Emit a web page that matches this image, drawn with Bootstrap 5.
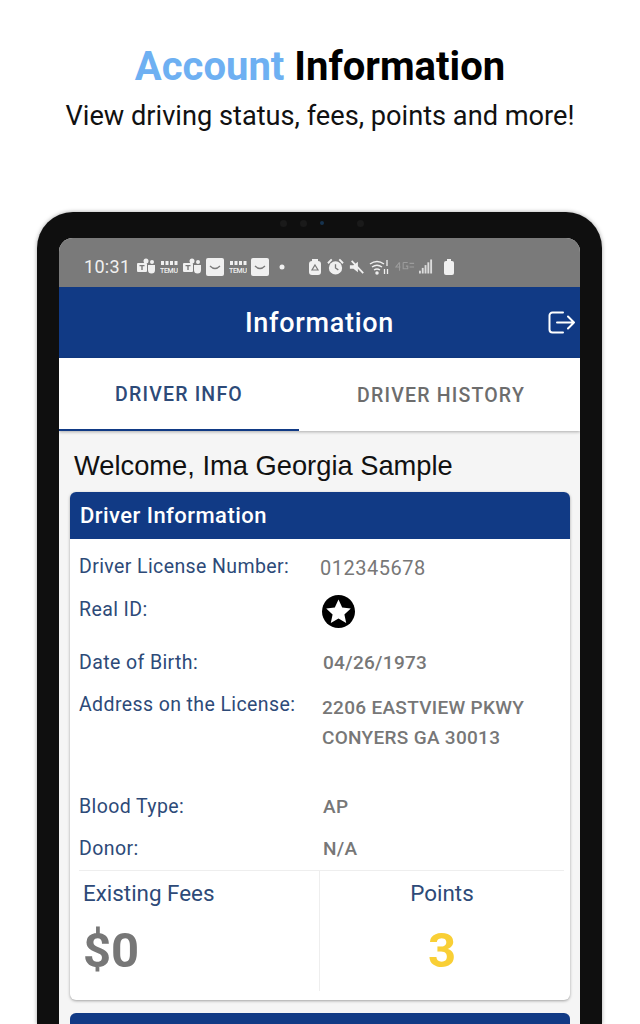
<!DOCTYPE html>
<html lang="en">
<head>
    <meta charset="UTF-8">
    <meta name="viewport" content="width=device-width, initial-scale=1.0">
    <title>Account Information</title>
    <link rel="stylesheet" href="https://cdn.jsdelivr.net/npm/bootstrap@5.3.0/dist/css/bootstrap.min.css">
    <style>
        html, body { height: 1024px; overflow: hidden; background: #fff; }
        body { font-family: Roboto, sans-serif; }
        .promo { padding-top: 44px; height: 212px; }
        .promo h1 { font-size: 40px; line-height: 46px; font-weight: 700; margin: 0; color: #000; }
        .promo h1 span { color: #6eb0f2; }
        .promo p { font-size: 27.2px; line-height: 34px; margin: 9px 0 0; color: #111; }
        .device { margin: 0 38px 0 37px; height: 812px; background: #0f0f0f; border-radius: 36px 36px 0 0; padding: 26px 22px 0; box-shadow: 0 0 4px rgba(0,0,0,.35); position: relative; }
        .camera { position: absolute; top: 8px; left: 243px; gap: 13px; }
        .camera i { display: block; width: 7px; height: 7px; border-radius: 50%; background: #1a1a1a; }
        .camera i.lens { background: #17334f; width: 4px; height: 4px; margin-top: 1px; }
        .camera i.last { margin-left: 20px; }
        .screen { height: 786px; background: #f5f5f5; border-radius: 14px 14px 0 0; overflow: hidden; }
        .status-strip { height: 49px; background: #7a7a7a; color: #f0f0f0; padding: 8px 0 0 25px; gap: 4.5px; font-size: 18px; }
        .status-strip .clock { margin-right: 2px; letter-spacing: .3px; }
        .status-strip .spacer { width: 10px; }
        .status-strip .recycle { margin-right: 2px; }
        .status-strip .batt { margin-left: 5px; }
        .app-head { height: 71px; background: #113a85; color: #fff; position: relative; font-size: 27px; font-weight: 500; letter-spacing: .7px; padding-top: 1px; }
        .app-head svg { position: absolute; right: 5px; top: 24px; }
        .tab-strip { height: 73px; background: #fff; box-shadow: 0 1px 3px rgba(0,0,0,.3); position: relative; }
        .tab-item { flex: 1 1 0; font-size: 19.5px; font-weight: 500; letter-spacing: 1.2px; color: #6d6d6d; padding: 2px 0 0 3px; }
        .tab-item.on { flex: 0 0 240px; color: #2d4a78; padding-left: 0; border-bottom: 2px solid #113a85; }
        .welcome { font-family: "Liberation Sans", sans-serif; font-size: 27.3px; line-height: 30px; color: #111; padding: 20px 0 0 15px; height: 61px; }
        .info-box { margin: 0 10px 0 11px; height: 508px; background: #fff; border-radius: 6px; box-shadow: 0 1px 3px rgba(0,0,0,.35); overflow: hidden; }
        .info-top { height: 47px; background: #113a85; color: #fff; font-size: 22px; font-weight: 500; letter-spacing: .45px; padding-left: 10px; }
        .info-body { padding: 0 6px 0 9px; }
        .line { position: relative; font-size: 19.5px; color: #2d4a78; letter-spacing: .4px; line-height: 26px; }
        .line .val { color: #777; font-weight: 500; font-size: 19px; letter-spacing: .3px; position: absolute; left: 244px; top: 0; }
        .h-a { height: 58px; padding-top: 15px; }
        .h-b { height: 53px; }
        .h-c { height: 42px; }
        .h-d { height: 102px; }
        .h-e { height: 34px; }
        .line .val.plain { font-weight: 400; font-size: 20px; left: 241px; top: 16px; letter-spacing: .5px; }
        .line .val.addr { line-height: 30px; top: 1px; left: 243px; }
        .line .val.star { left: 243px; top: -2px; }
        .totals { border-top: 1px solid #eee; height: 120px; }
        .totals > div { padding-top: 6px; font-size: 22.4px; color: #2d4a78; }
        .totals .fee { flex: 0 0 241px; height: 120px; border-right: 1px solid #eee; padding-left: 4px; }
        .totals .pts { flex: 1 1 0; }
        .big-num { font-size: 49px; font-weight: 700; line-height: 60px; margin-top: 10px; color: #777; }
        .big-num.gold { color: #f9cf35; }
        .next-box { margin: 13px 10px 0 11px; height: 20px; background: #113a85; border-radius: 6px 6px 0 0; }
        .temu-mark { font-size: 7px; fill: #f0f0f0; font-family: Roboto, sans-serif; font-weight: 500; }
    </style>
</head>
<body>
    <div class="promo text-center">
        <h1><span>Account</span> Information</h1>
        <p>View driving status, fees, points and more!</p>
    </div>

    <div class="device">
        <div class="camera d-flex"><i></i><i></i><i class="lens"></i><i class="last"></i></div>
        <div class="screen">
            <div class="status-strip d-flex align-items-center">
                <span class="clock">10:31</span>
                <svg width="19" height="18" viewBox="0 0 19 18" fill="#f0f0f0"><rect x="0" y="5" width="10" height="9" rx="1"/><circle cx="9" cy="3" r="2.5"/><circle cx="15" cy="4" r="2"/><path d="M11 7h7v5a3.500 3.500 0 0 1-7 0z"/><path d="M2.500 7h5v1.300H5.700V12H4.300V8.300H2.500z" fill="#7a7a7a"/></svg>
                <svg width="18" height="14" viewBox="0 0 18 14" fill="#f0f0f0"><rect x="1" y="1" width="3" height="4"/><rect x="5.500" y="1" width="3" height="4"/><rect x="10" y="1" width="3" height="4"/><rect x="14.500" y="1" width="3" height="4"/><text class="temu-mark" x="0" y="13" textLength="18">TEMU</text></svg>
                <svg width="19" height="18" viewBox="0 0 19 18" fill="#f0f0f0"><rect x="0" y="5" width="10" height="9" rx="1"/><circle cx="9" cy="3" r="2.500"/><circle cx="15" cy="4" r="2"/><path d="M11 7h7v5a3.500 3.500 0 0 1-7 0z"/><path d="M2.500 7h5v1.300H5.700V12H4.300V8.300H2.500z" fill="#7a7a7a"/></svg>
                <svg width="18" height="18" viewBox="0 0 18 18"><rect width="18" height="18" rx="2" fill="#f0f0f0"/><path d="M4 8q5 5 10 0" fill="none" stroke="#7a7a7a" stroke-width="1.300"/></svg>
                <svg width="18" height="14" viewBox="0 0 18 14" fill="#f0f0f0"><rect x="1" y="1" width="3" height="4"/><rect x="5.500" y="1" width="3" height="4"/><rect x="10" y="1" width="3" height="4"/><rect x="14.500" y="1" width="3" height="4"/><text class="temu-mark" x="0" y="13" textLength="18">TEMU</text></svg>
                <svg width="18" height="18" viewBox="0 0 18 18"><rect width="18" height="18" rx="2" fill="#f0f0f0"/><path d="M4 8q5 5 10 0" fill="none" stroke="#7a7a7a" stroke-width="1.300"/></svg>
                <svg width="16" height="8" viewBox="0 0 16 8" fill="#f0f0f0"><circle cx="8" cy="4" r="2.500"/></svg>
                <span class="spacer"></span>
                <svg class="recycle" width="12" height="18" viewBox="0 0 12 18"><rect x="0" y="3" width="12" height="14" rx="3" fill="#f0f0f0"/><rect x="3" y="1" width="6" height="3" fill="#f0f0f0"/><path d="M6 7l3 5H3z" fill="none" stroke="#7a7a7a" stroke-width="1.200"/></svg>
                <svg width="17" height="18" viewBox="0 0 18 18"><circle cx="9" cy="10" r="7" fill="#f0f0f0"/><path d="M1 5l4-4M17 5l-4-4" stroke="#f0f0f0" stroke-width="2"/><path d="M9 6v4l3 2" fill="none" stroke="#7a7a7a" stroke-width="1.400"/></svg>
                <svg width="16" height="18" viewBox="0 0 18 18" fill="#f0f0f0"><path d="M1 7h4l5-4v12l-5-4H1z"/><path d="M3 2l13 14" stroke="#f0f0f0" stroke-width="2"/></svg>
                <svg width="21" height="18" viewBox="0 0 21 18" fill="none" stroke="#f0f0f0" stroke-width="1.500"><path d="M1 6q7-5 14 0M3 9q5-3.500 10 0M5 12q3-2 6 0"/><circle cx="8" cy="15" r="1" fill="#f0f0f0"/><path d="M18 2v6M15.500 11v5M18.500 11v5" stroke-width="1.300"/></svg>
                <svg width="20" height="12" viewBox="0 0 22 12" fill="none" stroke="#9c9c9c" stroke-width="1.200"><path d="M5 1L1 6h5M5 1v9M9 1h5M9 1v7h5V5h-2M16 2h5M16 6h5"/></svg>
                <svg width="14" height="15" viewBox="0 0 15 15" fill="#dcdcdc"><rect x="0" y="12" width="2" height="3"/><rect x="3" y="9" width="2" height="6"/><rect x="6" y="6" width="2" height="9"/><rect x="9" y="3" width="2" height="12"/><rect x="12" y="0" width="2" height="15"/></svg>
                <svg class="batt" width="12" height="16" viewBox="0 0 12 16" fill="#f0f0f0"><rect x="1" y="2" width="10" height="14" rx="2"/><rect x="4" y="0" width="4" height="2"/></svg>
            </div>

            <div class="app-head d-flex align-items-center justify-content-center">
                Information
                <svg width="27" height="23" viewBox="0 0 27 23" fill="none" stroke="#fff" stroke-width="2" stroke-linecap="round" stroke-linejoin="round"><path d="M15 1.500H4.500a3 3 0 0 0-3 3v14a3 3 0 0 0 3 3H15"/><path d="M9 11.500h17M20 5.500l6 6-6 6"/></svg>
            </div>

            <div class="tab-strip d-flex">
                <div class="tab-item on d-flex align-items-center justify-content-center">DRIVER INFO</div>
                <div class="tab-item d-flex align-items-center justify-content-center">DRIVER HISTORY</div>
            </div>

            <div class="welcome">Welcome, Ima Georgia Sample</div>

            <div class="info-box">
                <div class="info-top d-flex align-items-center">Driver Information</div>
                <div class="info-body">
                    <div class="line h-a">Driver License Number:<span class="val plain">012345678</span></div>
                    <div class="line h-b">Real ID:
                        <span class="val star">
                            <svg width="33" height="33" viewBox="0 0 33 33"><circle cx="16.500" cy="16.500" r="16.500" fill="#000"/><path d="M16.500 4.500l3.700 8 8.600 1-6.400 5.900 1.800 8.600-7.700-4.400-7.700 4.400 1.800-8.600-6.400-5.900 8.600-1z" fill="#fff"/></svg>
                        </span>
                    </div>
                    <div class="line h-c">Date of Birth:<span class="val">04/26/1973</span></div>
                    <div class="line h-d">Address on the License:<span class="val addr">2206 EASTVIEW PKWY<br>CONYERS GA 30013</span></div>
                    <div class="line h-c">Blood Type:<span class="val">AP</span></div>
                    <div class="line h-e">Donor:<span class="val">N/A</span></div>
                    <div class="totals d-flex">
                        <div class="fee">
                            Existing Fees
                            <div class="big-num">$0</div>
                        </div>
                        <div class="pts text-center">
                            Points
                            <div class="big-num gold">3</div>
                        </div>
                    </div>
                </div>
            </div>
            <div class="next-box"></div>
        </div>
    </div>
    <script src="https://cdn.jsdelivr.net/npm/bootstrap@5.3.0/dist/js/bootstrap.bundle.min.js"></script>
</body>
</html>
